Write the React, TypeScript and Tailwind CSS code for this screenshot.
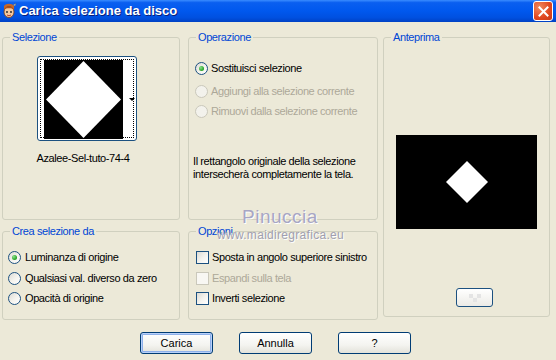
import React from "react";

const font = { fontFamily: '"Liberation Sans", Arial, sans-serif' };

function Radio({ checked, disabled }: { checked?: boolean; disabled?: boolean }) {
  return (
    <span
      className={
        "relative inline-flex h-[13px] w-[13px] shrink-0 items-center justify-center rounded-full border " +
        (disabled
          ? "border-[#CAC8BB] bg-[#F3F2EC]"
          : "border-[#1C5180] bg-[linear-gradient(135deg,#DCDBD5_0%,#F5F4EF_55%,#FFFFFF_100%)]")
      }
    >
      {checked && (
        <span className="h-[5px] w-[5px] rounded-full bg-[radial-gradient(circle_at_35%_35%,#8CE08C,#21A121_70%)]" />
      )}
    </span>
  );
}

function Check({ disabled }: { disabled?: boolean }) {
  return (
    <span
      className={
        "inline-block h-[13px] w-[13px] shrink-0 border " +
        (disabled
          ? "border-[#CAC8BB] bg-[#F8F7F3]"
          : "border-[#1C5180] bg-[linear-gradient(135deg,#DCDBD5_0%,#F5F4EF_55%,#FFFFFF_100%)]")
      }
    />
  );
}

function Group({
  title,
  className,
  children,
}: {
  title: string;
  className?: string;
  children?: React.ReactNode;
}) {
  return (
    <fieldset className={"rounded-[3px] border border-[#D0D0BF] " + (className ?? "")}>
      <legend className="ml-[7px] px-[2px] leading-[13px] text-[#0046D5]">{title}</legend>
      {children}
    </fieldset>
  );
}

function XpButton({ label, def }: { label: string; def?: boolean }) {
  return (
    <button
      type="button"
      className={
        "h-[22px] w-[73px] rounded-[3px] border border-[#003C74] bg-[linear-gradient(180deg,#FFFFFF_0%,#F4F4F0_60%,#E3E2DA_100%)] text-[11px] text-black " +
        (def ? "shadow-[inset_0_0_0_1px_#B9D1F9,inset_0_0_0_2px_#8EB0EA]" : "")
      }
    >
      {label}
    </button>
  );
}

function AppIcon() {
  return (
    <svg width="16" height="16" viewBox="0 0 16 16">
      <path d="M3 3 C5 0, 11 0, 13 3 L13 7 L3 7 Z" fill="#C8662A" />
      <ellipse cx="8" cy="9" rx="5" ry="5.5" fill="#F3C9A0" stroke="#7A3A10" strokeWidth="0.8" />
      <path d="M3 6 C5 3, 11 3, 13 6 C11 5, 5 5, 3 6 Z" fill="#B2501C" />
      <circle cx="6" cy="9" r="0.9" fill="#222" />
      <circle cx="10" cy="9" r="0.9" fill="#222" />
      <path d="M6 12 Q8 13.5 10 12" stroke="#B03020" strokeWidth="0.9" fill="none" />
      <path d="M12 2 L15 0.5 L14 3 Z" fill="#E8E0C0" stroke="#555" strokeWidth="0.4" />
    </svg>
  );
}

export default function App() {
  return (
    <div
      className="relative h-[360px] w-[556px] overflow-hidden bg-[#ECE9D8] text-[11px] tracking-[-0.4px] text-black"
      style={font}
    >
      {/* Title bar */}
      <div className="flex h-[22px] items-center bg-[linear-gradient(180deg,#3A8CFF_0%,#0A5FF0_12%,#0058EE_50%,#0050E0_80%,#0041C4_100%)] pl-[1px] pr-[3px]">
        <AppIcon />
        <span className="ml-[2px] text-[13px] font-bold tracking-[0px] text-white [text-shadow:1px_1px_0_#0A1E7A]">
          Carica selezione da disco
        </span>
        <div className="ml-auto flex h-[20px] w-[20px] items-center justify-center rounded-[3px] border border-white bg-[radial-gradient(circle_at_30%_30%,#F08A60,#E0461F_60%,#C83A18)]">
          <svg width="11" height="11" viewBox="0 0 11 11">
            <path d="M1.5 1.5 L9.5 9.5 M9.5 1.5 L1.5 9.5" stroke="white" strokeWidth="2" strokeLinecap="square" />
          </svg>
        </div>
      </div>

      {/* Body */}
      <div className="flex pl-[2px] pt-[9px]">
        {/* Left column */}
        <div className="flex w-[178px] flex-col gap-[5px]">
          <Group title="Selezione" className="h-[189px]">
            <div className="relative ml-[34px] mt-[12px] h-[85px] w-[100px] rounded-[3px] border border-[#1C5180] bg-white">
              <div className="absolute inset-[2px] border border-dotted border-black" />
              <div className="absolute left-[6px] top-[3px] h-[79px] w-[79px] bg-black">
                <svg width="79" height="79" viewBox="0 0 79 79">
                  <polygon points="39.5,1 77,39.5 39.5,78 2,39.5" fill="white" />
                </svg>
              </div>
              <div className="absolute left-[91px] top-[41px] h-0 w-0 border-x-[3px] border-t-[3px] border-x-transparent border-t-black" />
            </div>
            <div className="ml-[30px] mt-[11px] w-[100px] whitespace-nowrap text-center leading-[13px]">
              Azalee-Sel-tuto-74-4
            </div>
          </Group>
          <Group title="Crea selezione da" className="h-[95px]">
            <div className="flex flex-col pl-[5px] pt-[13px]">
              <label className="flex h-[13px] items-center gap-[4px]">
                <Radio checked />
                Luminanza di origine
              </label>
              <label className="mt-[8px] flex h-[13px] items-center gap-[4px]">
                <Radio />
                Qualsiasi val. diverso da zero
              </label>
              <label className="mt-[7px] flex h-[13px] items-center gap-[4px]">
                <Radio />
                Opacità di origine
              </label>
            </div>
          </Group>
        </div>

        {/* Middle column */}
        <div className="ml-[8px] flex w-[190px] flex-col gap-[5px]">
          <Group title="Operazione" className="h-[189px]">
            <div className="flex flex-col pl-[6px] pt-[18px]">
              <label className="flex h-[13px] items-center gap-[3px]">
                <Radio checked />
                Sostituisci selezione
              </label>
              <label className="mt-[10px] flex h-[13px] items-center gap-[3px] text-[#ACA899]">
                <Radio disabled />
                Aggiungi alla selezione corrente
              </label>
              <label className="mt-[7px] flex h-[13px] items-center gap-[3px] text-[#ACA899]">
                <Radio disabled />
                Rimuovi dalla selezione corrente
              </label>
            </div>
            <p className="mt-[37px] pl-[4px] leading-[13px]">
              Il rettangolo originale della selezione
              <br />
              intersecherà completamente la tela.
            </p>
          </Group>
          <Group title="Opzioni" className="h-[95px]">
            <div className="flex flex-col pl-[7px] pt-[13px]">
              <label className="flex h-[13px] items-center gap-[3px]">
                <Check />
                Sposta in angolo superiore sinistro
              </label>
              <label className="mt-[8px] flex h-[13px] items-center gap-[3px] text-[#ACA899]">
                <Check disabled />
                Espandi sulla tela
              </label>
              <label className="mt-[7px] flex h-[13px] items-center gap-[3px]">
                <Check />
                Inverti selezione
              </label>
            </div>
          </Group>
        </div>

        {/* Right column */}
        <Group title="Anteprima" className="ml-[5px] h-[286px] w-[167px]">
          <div className="ml-[12px] mt-[91px] flex h-[94px] w-[141px] items-center justify-center bg-black">
            <svg width="44" height="44" viewBox="0 0 44 44">
              <polygon points="22,1 43,22 22,43 1,22" fill="white" />
            </svg>
          </div>
          <button
            type="button"
            className="ml-[72px] mt-[59px] flex h-[19px] w-[37px] items-center justify-center rounded-[3px] border border-[#1C5180] bg-[linear-gradient(180deg,#FFFFFF,#ECEBE6)]"
          >
            <svg width="20" height="10" viewBox="0 0 20 10">
              <rect x="4" y="1" width="4" height="4" fill="#E4E4E4" />
              <rect x="12" y="1" width="4" height="4" fill="#E4E4E4" />
              <rect x="8" y="5" width="4" height="4" fill="#E4E4E4" />
            </svg>
          </button>
        </Group>
      </div>

      {/* Buttons */}
      <div className="mt-[12px] flex gap-[26px] pl-[140px] tracking-[0px]">
        <XpButton label="Carica" def />
        <XpButton label="Annulla" />
        <XpButton label="?" />
      </div>

      {/* Watermark */}
      <div className="pointer-events-none absolute left-[242px] top-[203px] text-[19px] tracking-[0.5px] text-[#A7A6C4] [text-shadow:1px_1px_0_#FFFFFF]">
        Pinuccia
      </div>
      <div className="pointer-events-none absolute left-[217px] top-[226px] text-[12px] tracking-[0.3px] text-[#A09FB0] [text-shadow:1px_1px_0_#FFFFFF]">
        www.maidiregrafica.eu
      </div>
    </div>
  );
}
